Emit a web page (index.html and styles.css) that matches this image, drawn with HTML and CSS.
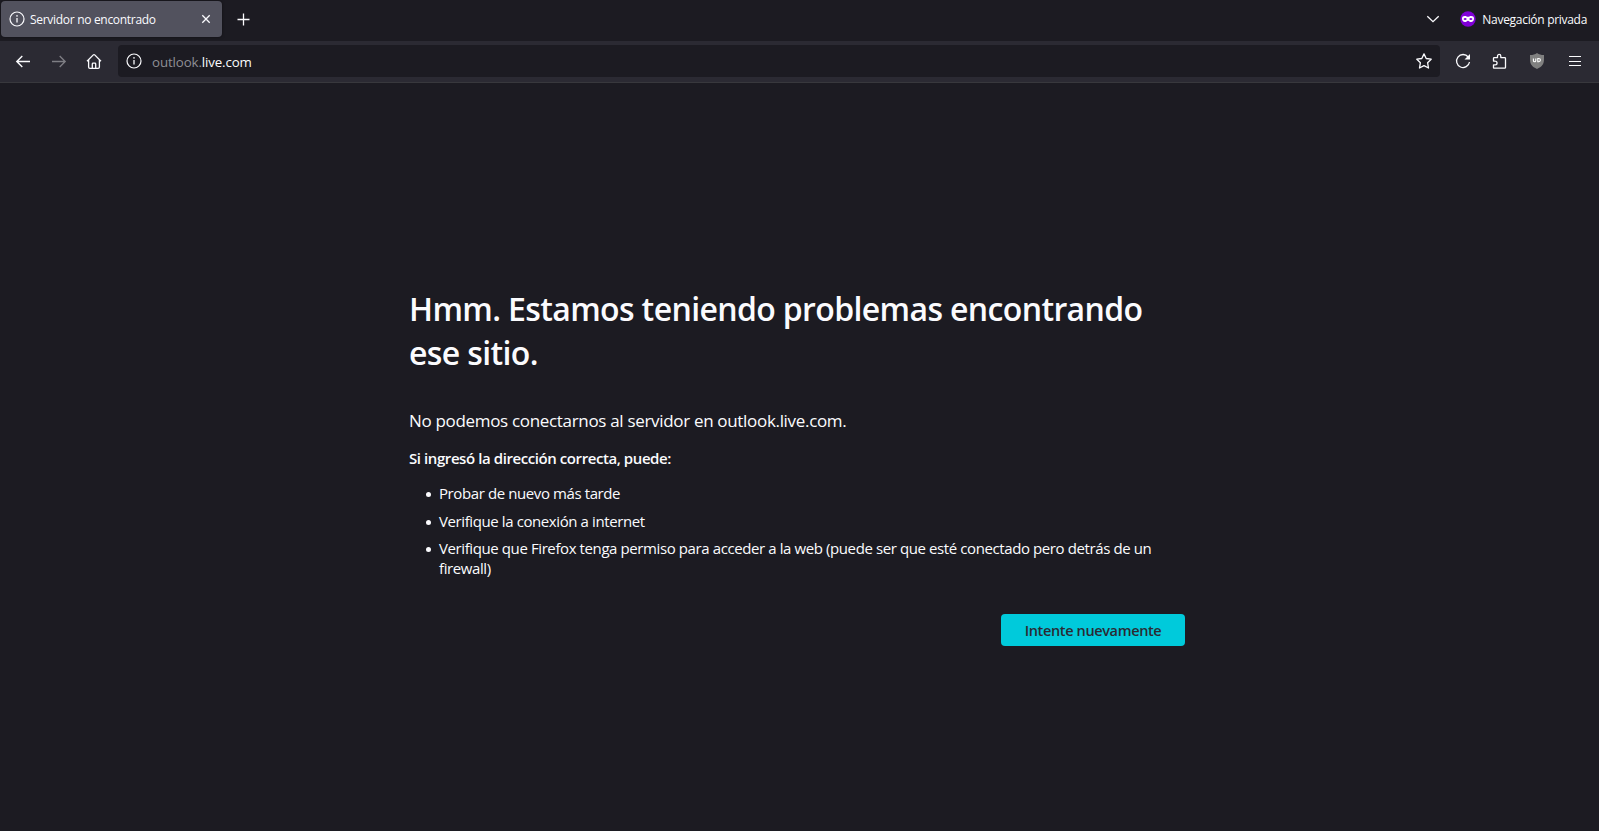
FILE: index.html
```html
<!DOCTYPE html>
<html lang="es">
<head>
    <meta charset="UTF-8">
    <meta name="viewport" content="width=device-width, initial-scale=1.0">
    <title>Servidor no encontrado</title>
    <link rel="stylesheet" href="styles.css">
</head>
<body>
    <div class="tab-bar">
        <div class="tab">
            <svg class="icon" width="16" height="16" viewBox="0 0 16 16"><circle cx="8" cy="8" r="7" fill="none" stroke="currentColor" stroke-width="1.2"/><path d="M8 7v4.5" stroke="currentColor" stroke-width="1.3"/><circle cx="8" cy="4.9" r=".8" fill="currentColor"/></svg>
            <span class="tab-title">Servidor no encontrado</span>
            <svg class="icon" width="10" height="10" viewBox="0 0 10 10"><path d="M1.3 1.3l7.4 7.4M8.7 1.3L1.3 8.7" stroke="currentColor" stroke-width="1.3"/></svg>
        </div>
        <svg class="icon new-tab" width="14" height="14" viewBox="0 0 14 14"><path d="M7.5 1.5v12M1.5 7.5h12" stroke="currentColor" stroke-width="1.3"/></svg>
        <svg class="icon all-tabs" width="14" height="8" viewBox="0 0 14 8"><path d="M1.3 1.2L7 6.7l5.7-5.5" fill="none" stroke="currentColor" stroke-width="1.3"/></svg>
        <div class="private">
            <svg width="16" height="16" viewBox="0 0 16 16"><circle cx="8" cy="8" r="7.7" fill="#8000d7"/><path fill="#fff" fill-rule="evenodd" d="M2 7.600C2 5.800 3 5 4.800 5c1.500 0 2.200.8 3.200.8S9.700 5 11.200 5C13 5 14 5.800 14 7.600c0 2-1.200 3.500-2.900 3.500-1.600 0-2.100-1.400-3.100-1.400s-1.500 1.400-3.100 1.400C3.200 11.100 2 9.600 2 7.600zM3.500 8c.5.800 1 1.100 1.700 1.100S6.500 8.700 6.800 8C6.300 7.300 5.800 7 5.100 7S4 7.300 3.500 8zM9.200 8c.3.700.9 1.100 1.600 1.100s1.200-.3 1.700-1.100C12 7.300 11.600 7 10.900 7s-1.200.3-1.700 1z"/></svg>
            <span>Navegación privada</span>
        </div>
    </div>

    <div class="toolbar">
        <div class="nav">
            <svg class="icon" width="16" height="16" viewBox="0 0 16 16"><path d="M15 8.500H1.800M7.300 3L1.800 8.500 7.300 14" fill="none" stroke="currentColor" stroke-width="1.4"/></svg>
            <svg class="icon disabled" width="16" height="16" viewBox="0 0 16 16"><path d="M1 8.500h13.200M8.700 3l5.500 5.500L8.700 14" fill="none" stroke="currentColor" stroke-width="1.3"/></svg>
            <svg class="icon home" width="16" height="16" viewBox="0 0 16 16"><path d="M1 8.300l6.300-6.400q.7-.7 1.400 0L15 8.300M2.600 7v7q0 1.300 1.300 1.300h8.200q1.300 0 1.300-1.300V7M6.300 15v-4.100q0-.8.8-.8h1.800q.8 0 .8.800V15" fill="none" stroke="currentColor" stroke-width="1.3"/></svg>
        </div>
        <div class="url-bar">
            <svg class="icon" width="16" height="16" viewBox="0 0 16 16"><circle cx="8" cy="8" r="7" fill="none" stroke="currentColor" stroke-width="1.2"/><path d="M8 7v4.5" stroke="currentColor" stroke-width="1.3"/><circle cx="8" cy="4.9" r=".8" fill="currentColor"/></svg>
            <span class="url">outlook.<b>live.com</b></span>
            <svg class="icon" width="16" height="16" viewBox="0 0 16 16"><path d="M8 .9l2.200 4.600 5 .7-3.600 3.500.9 5.300L8 12.600 3.500 15l.9-5.300L.8 6.200l5-.7z" fill="none" stroke="currentColor" stroke-width="1.3" stroke-linejoin="round"/></svg>
        </div>
        <div class="actions">
            <svg class="icon" width="16" height="16" viewBox="0 0 16 16"><path d="M13.200 4A6.500 6.500 0 1 0 14.500 9" fill="none" stroke="currentColor" stroke-width="1.3"/><path d="M15 1v5q0 .5-.5.500H9.500z" fill="currentColor"/></svg>
            <svg class="icon" width="16" height="16" viewBox="0 0 16 16"><path d="M1.500 8V5.300q0-.7.7-.7H5.500V3.100a1.600 1.600 0 0 1 3.300 0v1.500h3.900q.8 0 .8.800v9q0 .8-.8.800H2.200q-.7 0-.7-.7v-2.700h1.700a1.800 1.800 0 0 0 0-3.700z" fill="none" stroke="currentColor" stroke-width="1.3" stroke-linejoin="round"/></svg>
            <svg width="16" height="16" viewBox="0 0 16 16"><path d="M8 0c2 1.400 4 2 7 2v4.500c0 4.500-2 7.200-7 9.500-5-2.300-7-5-7-9.500V2c3 0 5-.6 7-2z" fill="#808080"/><path d="M4.400 5.500v2q0 1.300 1.200 1.300t1.200-1.300v-2M8.800 5.500v3.200h1a1.600 1.600 0 0 0 0-3.200z" fill="none" stroke="#fff" stroke-width="1.1"/></svg>
            <svg class="icon menu" width="16" height="16" viewBox="0 0 16 16"><path d="M2 3.500h12M2 8.500h12M2 12.500h12" stroke="currentColor" stroke-width="1.2"/></svg>
        </div>
    </div>

    <div class="page">
        <div class="container">
            <h1>Hmm. Estamos teniendo problemas encontrando ese sitio.</h1>
            <p class="short-desc">No podemos conectarnos al servidor en outlook.live.com.</p>
            <p class="long-desc">Si ingresó la dirección correcta, puede:</p>
            <ul>
                <li>Probar de nuevo más tarde</li>
                <li>Verifique la conexión a internet</li>
                <li>Verifique que Firefox tenga permiso para acceder a la web (puede ser que esté conectado pero detrás de un firewall)</li>
            </ul>
            <div class="buttons">
                <button class="try-again">Intente nuevamente</button>
            </div>
        </div>
    </div>
</body>
</html>
```
FILE: styles.css
```css
* {
    box-sizing: border-box;
}
body {
    margin: 0;
    height: 100vh;
    display: flex;
    flex-direction: column;
    overflow: hidden;
    background-color: #1c1b22;
    color: #fbfbfe;
    font-family: "Open Sans", "Noto Sans", sans-serif;
}
svg {
    display: block;
    flex: none;
}
.icon {
    color: #fbfbfe;
}
.tab-bar {
    display: flex;
    align-items: center;
    height: 41px;
    padding: 0 12px 3px 1px;
    font-size: 12px;
}
.tab {
    display: flex;
    align-items: center;
    width: 221px;
    height: 36px;
    padding: 0 11px 0 8px;
    border-radius: 4px;
    background-color: #52525e;
    box-shadow: 0 0 3px rgba(0, 0, 0, 0.5);
}
.tab-title {
    flex: 1;
    margin-left: 5px;
    padding-top: 1px;
    letter-spacing: -0.3px;
}
.new-tab {
    margin-left: 14px;
}
.all-tabs {
    margin-left: auto;
}
.private {
    display: flex;
    align-items: center;
    gap: 6.5px;
    margin-left: 20px;
    letter-spacing: -0.3px;
}
.private span {
    padding-top: 1px;
}
.toolbar {
    display: flex;
    align-items: center;
    height: 42px;
    padding-bottom: 1px;
    background-color: #2b2a33;
    border-bottom: 1px solid #38383d;
}
.nav {
    display: flex;
    gap: 20px;
    padding: 0 15px;
}
.home {
    margin: 0 1px 0 -1px;
}
.disabled {
    opacity: 0.4;
}
.url-bar {
    flex: 1;
    display: flex;
    align-items: center;
    height: 32px;
    padding: 0 8px;
    border-radius: 4px;
    background-color: #1c1b22;
    font-size: 13.3px;
}
.url {
    flex: 1;
    margin-left: 10px;
    padding-top: 2px;
    color: #8f8f96;
    letter-spacing: -0.12px;
}
.url b {
    font-weight: normal;
    color: #fbfbfe;
}
.actions {
    display: flex;
    gap: 21px;
    padding: 0 16px 0 15px;
}
.menu {
    margin-left: 1px;
}
.page {
    flex: 1;
    display: flex;
    justify-content: center;
    align-items: flex-start;
    padding-top: 204px;
}
.container {
    width: 776px;
    margin-left: -5px;
    font-size: 15px;
    line-height: 20px;
    letter-spacing: -0.4px;
}
h1 {
    margin: 0 0 34px;
    font-size: 32px;
    font-weight: 600;
    line-height: 44px;
    letter-spacing: -0.63px;
}
p {
    margin: 0;
}
.short-desc {
    margin-bottom: 15px;
    font-size: 17px;
    line-height: 24px;
    letter-spacing: -0.32px;
}
.long-desc {
    margin-bottom: 15px;
    font-weight: 600;
    letter-spacing: -0.42px;
}
ul {
    margin: 0;
    padding-left: 30px;
    list-style: none;
}
li {
    margin-bottom: 7.5px;
}
li::before {
    content: "";
    display: inline-block;
    width: 5px;
    height: 5px;
    margin: 0 8px 2px -13px;
    border-radius: 50%;
    background-color: #fbfbfe;
}
.buttons {
    display: flex;
    justify-content: flex-end;
    margin-top: 36px;
}
.try-again {
    width: 184px;
    height: 32px;
    padding: 0;
    border: none;
    border-radius: 4px;
    background-color: #00cadb;
    color: #2b2a33;
    font-family: inherit;
    font-size: 14.5px;
    font-weight: 600;
    letter-spacing: -0.36px;
}
```
